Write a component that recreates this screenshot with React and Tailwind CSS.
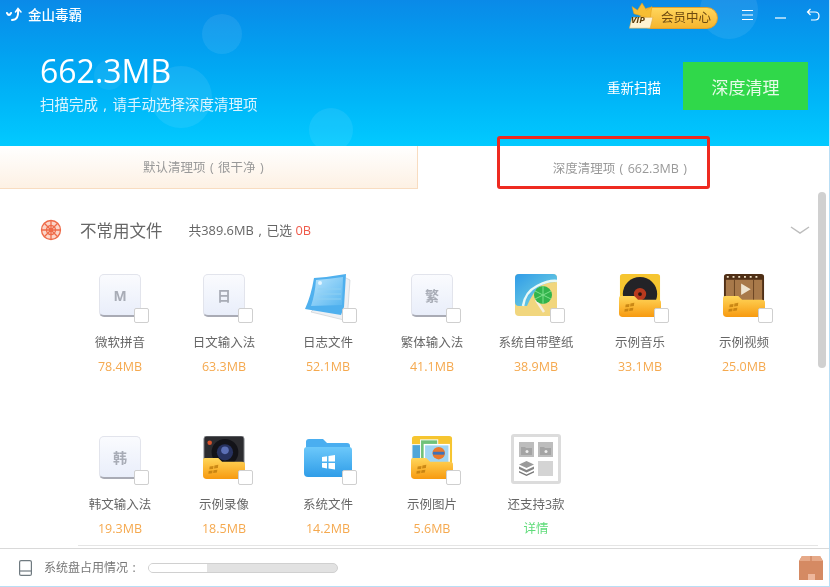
import React from 'react'

const cjk = { fontFamily: '"Open Sans","Noto Sans CJK SC",sans-serif' }

// the original UI font centres its punctuation in a full-width cell
function P({children}){
  return <span className="inline-block w-[1em] text-center">{children}</span>
}

function Check(){
  return <span className="absolute right-[-8px] bottom-[-3px] w-[15px] h-[15px] bg-white border border-[#cfcfcf] rounded-[2px]"></span>
}

function KeyIcon({ch}){
  return (
    <div className="w-[42px] h-[43px] rounded-[5px] bg-gradient-to-b from-[#fafbfe] to-[#e9eefa] border border-[#e2e4ec] border-b-[2px] border-b-[#a9abb5] flex items-center justify-center text-[14px] font-bold text-[#a8acb6]">
      {ch}
    </div>
  )
}

function FolderFront(){
  return (
    <>
      <path d="M0 25q0-2 2-2h14l4 4h21q3 0 3 3v11q0 4-4 4H4q-4 0-4-4z" fill="url(#fold)"/>
      <g fill="#b9770a" opacity=".75">
        <path d="M7 32l4-.6-.4 3-4 .5zM12 30.800l4-.6-.4 3.200-4 .5zM6 36.500l4-.5-.4 3-4 .4zM11 35.800l4-.5-.4 3-4 .5z"/>
      </g>
    </>
  )
}

function Defs(){
  return (
    <svg width="0" height="0" className="absolute">
      <defs>
        <linearGradient id="fold" x1="0" y1="0" x2="0" y2="1">
          <stop offset="0" stopColor="#ffd65a"/>
          <stop offset="1" stopColor="#f79a10"/>
        </linearGradient>
        <linearGradient id="sea" x1="0" y1="0" x2="1" y2="1">
          <stop offset="0" stopColor="#2f9be8"/>
          <stop offset="1" stopColor="#7fdce0"/>
        </linearGradient>
        <linearGradient id="blue" x1="0" y1="0" x2="0" y2="1">
          <stop offset="0" stopColor="#6cc8fa"/>
          <stop offset="1" stopColor="#2f9de8"/>
        </linearGradient>
        <linearGradient id="cover" x1="0" y1="0" x2="1" y2="1">
          <stop offset="0" stopColor="#b8e4fc"/>
          <stop offset="1" stopColor="#58b6f0"/>
        </linearGradient>
      </defs>
    </svg>
  )
}

function NoteIcon(){
  return (
    <svg width="46" height="47" viewBox="0 0 46 47">
      <path d="M6 38l33 8 4-12 2-28-6-3z" fill="#eef0f3" stroke="#c3c9d0" strokeWidth=".6"/>
      <path d="M9 4Q24 3 41 0L39 33 36 41 0 35Q6 22 9 4z" fill="#4fb0ee"/>
      <path d="M11 6Q24 5 38 3L37 31 6 32Q10 20 11 6z" fill="url(#cover)"/>
      <path d="M13 15h23M12 20h24M11 25h25" stroke="#8fd0f2" strokeWidth="1"/>
      <circle cx="15" cy="9" r="2" fill="#e4f5ff"/>
    </svg>
  )
}

function BeachIcon(){
  return (
    <svg width="42" height="42" viewBox="0 0 42 42">
      <rect width="42" height="42" rx="4" fill="#f1d67e"/>
      <path d="M0 4q0-4 4-4h34q4 0 4 4v4q-12 0-18 5t-12 19H4q-4 0-4-4z" fill="url(#sea)"/>
      <path d="M8 32q2-14 14-20t20-5" fill="none" stroke="#e8f8f6" strokeWidth="2.500"/>
      <path d="M21 26l8 12" stroke="#f5efe0" strokeWidth="2.500"/>
      <circle cx="28" cy="21" r="9" fill="#32b44c"/>
      <path d="M28 12v18M20 17l16 8M36 17l-16 8" stroke="#7ee08c" strokeWidth="1"/>
    </svg>
  )
}

function MusicIcon(){
  return (
    <svg width="42" height="44" viewBox="0 0 44 46">
      <rect x="1" y="0" width="42" height="30" rx="3" fill="#f6c530"/>
      <circle cx="22" cy="21" r="18" fill="#232327"/>
      <circle cx="22" cy="21" r="6.500" fill="#b83a1e"/>
      <circle cx="22" cy="21" r="2" fill="#2a1410"/>
      <FolderFront/>
    </svg>
  )
}

function VideoIcon(){
  return (
    <svg width="42" height="44" viewBox="0 0 44 46">
      <rect x="1" y="0" width="42" height="30" rx="3" fill="#4f2f16"/>
      <rect x="3" y="6" width="38" height="22" fill="#a8794a"/>
      <path d="M4 3h36" stroke="#f3e4c8" strokeWidth="2" strokeDasharray="2 4"/>
      <path d="M12 6v22M32 6v22" stroke="#6a4423" strokeWidth="1"/>
      <path d="M19 10l10 6-10 6z" fill="#eee3cf"/>
      <FolderFront/>
    </svg>
  )
}

function CameraIcon(){
  return (
    <svg width="42" height="44" viewBox="0 0 44 46">
      <rect x="1" y="0" width="42" height="34" rx="3" fill="#2c2c30" stroke="#85878c" strokeWidth="1"/>
      <circle cx="23" cy="17" r="14" fill="#131318"/>
      <circle cx="23" cy="17" r="8.500" fill="#27325f"/>
      <circle cx="23" cy="15" r="4" fill="#5b6fb5"/>
      <circle cx="7" cy="7" r="2.400" fill="#d9522c"/>
      <FolderFront/>
    </svg>
  )
}

function WinFolder(){
  return (
    <svg width="50" height="42" viewBox="0 0 50 42">
      <path d="M3 6q0-3 3-3h14l4 4h20q3 0 3 3v6H3z" fill="#4aaef0"/>
      <path d="M1 14q0-3 3-3h42q3 0 3 3v23q0 4-4 4H5q-4 0-4-4z" fill="url(#blue)"/>
      <path d="M19 21l5-.8v5.400h-5zM25.500 20l6.500-1v6.600h-6.500zM19 27h5v5.400l-5-.8zM25.500 27H32v6.600l-6.500-1z" fill="#fff"/>
    </svg>
  )
}

function PhotoIcon(){
  return (
    <svg width="42" height="44" viewBox="0 0 44 46">
      <rect x="1" y="0" width="42" height="30" rx="3" fill="#f6c530"/>
      <rect x="1" y="9" width="14" height="18" fill="#4fa6d8" stroke="#fff"/>
      <rect x="10" y="4" width="18" height="20" fill="#6fc27a" stroke="#fff"/>
      <rect x="14" y="9" width="26" height="22" fill="#9fd5f3" stroke="#fff" strokeWidth="1.500"/>
      <circle cx="29" cy="18" r="6.500" fill="#e8792d"/>
      <path d="M23 18h12" stroke="#3f72b8" strokeWidth="3"/>
      <FolderFront/>
    </svg>
  )
}

function Cell(){
  return (
    <svg viewBox="0 0 15 15" className="w-[15px] h-[15px]">
      <rect width="15" height="15" fill="#bdbdbd"/>
      <path d="M2 5h4l1 1h6v7H2z" fill="#a4a4a4"/>
      <circle cx="8" cy="9.500" r="1.500" fill="#eee"/>
    </svg>
  )
}

function MoreIcon(){
  return (
    <div className="w-[50px] h-[50px] -mt-[2px] border-[3px] border-[#dcdcdc] rounded-[3px] grid grid-cols-2 gap-[4px] p-[5px] bg-white">
      <Cell/>
      <Cell/>
      <svg viewBox="0 0 15 15" className="w-[15px] h-[15px]"><path d="M7.500 0L15 3.500 7.500 7 0 3.500z" fill="#9a9a9a"/><path d="M0 5.500L7.500 9 15 5.500V8l-7.500 3.500L0 8z" fill="#868686"/><path d="M0 10l7.500 3.500L15 10v1.500L7.500 15 0 11.500z" fill="#777"/></svg>
      <span className="w-[15px] h-[15px] bg-[#d4d4d4]"></span>
    </div>
  )
}

function Item({icon, name, size, noCheck, green}){
  return (
    <div className="flex flex-col items-center">
      <div className="relative w-[42px] h-[46px] flex items-start justify-center">
        <div className="shrink-0">{icon}</div>
        {!noCheck && <Check/>}
      </div>
      <div className="mt-[13px] text-[12.5px] leading-[20px] text-[#666] whitespace-nowrap">{name}</div>
      <div className={`mt-[5px] text-[12.5px] leading-[18px] ${green ? 'text-[#5fdc7a]' : 'text-[#f5a94f]'}`}>{size}</div>
    </div>
  )
}

const items = [
  { icon: <KeyIcon ch="M"/>, name: '微软拼音', size: '78.4MB' },
  { icon: <KeyIcon ch="日"/>, name: '日文输入法', size: '63.3MB' },
  { icon: <NoteIcon/>, name: '日志文件', size: '52.1MB' },
  { icon: <KeyIcon ch="繁"/>, name: '繁体输入法', size: '41.1MB' },
  { icon: <BeachIcon/>, name: '系统自带壁纸', size: '38.9MB' },
  { icon: <MusicIcon/>, name: '示例音乐', size: '33.1MB' },
  { icon: <VideoIcon/>, name: '示例视频', size: '25.0MB' },
  { icon: <KeyIcon ch="韩"/>, name: '韩文输入法', size: '19.3MB' },
  { icon: <CameraIcon/>, name: '示例录像', size: '18.5MB' },
  { icon: <WinFolder/>, name: '系统文件', size: '14.2MB' },
  { icon: <PhotoIcon/>, name: '示例图片', size: '5.6MB' },
  { icon: <MoreIcon/>, name: '还支持3款', size: '详情', noCheck: true, green: true },
]

export default function App(){
  return (
    <div style={cjk} className="relative w-[830px] h-[587px] overflow-hidden bg-white flex flex-col border-r border-b border-[#b9def5] blur-[0.35px]">
      <Defs/>
      {/* header */}
      <div className="relative h-[146px] shrink-0 overflow-hidden bg-gradient-to-b from-[#0a8ae8] to-[#02caff] text-white">
        <span className="absolute left-[202px] top-[14px] w-[40px] h-[40px] rounded-full bg-white/[0.08]"></span>
        <span className="absolute left-[150px] top-[66px] w-[62px] h-[62px] rounded-full bg-white/[0.08]"></span>
        <span className="absolute left-[94px] top-[60px] w-[30px] h-[30px] rounded-full bg-white/[0.06]"></span>
        <span className="absolute left-[309px] top-[108px] w-[44px] h-[44px] rounded-full bg-white/[0.08]"></span>
        <span className="absolute left-[700px] top-[-19px] w-[58px] h-[58px] rounded-full bg-white/[0.08]"></span>

        <div className="relative h-[30px] flex items-center pl-[6px]">
          <svg width="16" height="16" viewBox="0 0 16 16" fill="none" stroke="#fff" strokeWidth="2" strokeLinecap="round">
            <path d="M1 6q2 4 4 0M12 3Q13 13 6 13"/>
            <path d="M9.500 5L12 1.500 15 5" strokeWidth="1.500"/>
          </svg>
          <span className="ml-[6px] text-[13.5px] font-medium">金山毒霸</span>

          <div className="ml-auto flex items-center">
            <div className="relative mt-[6px] flex items-center h-[22px] w-[78px] pl-[20px] rounded-full bg-gradient-to-b from-[#ffd65c] to-[#f5b52c] border border-[#e0a030] text-[#6d4a10] text-[12.5px]">
              <span>会员中心</span>
              <svg className="absolute left-[-13px] top-[-6px]" width="28" height="28" viewBox="0 0 28 31">
                <path d="M5 13L3 5l6 4 5-8 5 8 6-4-2 13z" fill="#f7be33" stroke="#e29c1c" strokeWidth=".6"/>
                <path d="M3 17h23l-3 12H0z" fill="#fff3d2" stroke="#dca63f" strokeWidth=".6"/>
              </svg>
              <span className="absolute left-[-10px] top-[5px] text-[9px] font-bold italic text-[#5a3b08]">VIP</span>
            </div>
            <svg className="ml-[24px]" width="11" height="12" viewBox="0 0 11 12" stroke="#fff" strokeWidth="1.200">
              <path d="M0 1.500h11M0 6h11M0 10.500h11"/>
            </svg>
            <svg className="ml-[22px] mt-[6px]" width="11" height="12" viewBox="0 0 11 12" stroke="#fff" strokeWidth="1.200">
              <path d="M0 6h11"/>
            </svg>
            <svg className="ml-[20px] mr-[9px]" width="14" height="14" viewBox="0 0 14 14" fill="none" stroke="#fff" strokeWidth="1.200">
              <path d="M4.500 1L1.500 4l3 3M1.500 4H9q4 0 4 4t-4 4H5"/>
            </svg>
          </div>
        </div>

        <div className="relative flex items-start pl-[40px] pr-[21px] pt-[18px]">
          <div>
            <div className="text-[32px] leading-[46px] font-normal">662.3MB</div>
            <div className="mt-[1px] text-[14.5px] leading-[20px] text-[#dcf5ff]">扫描完成<P>,</P>请手动选择深度清理项</div>
          </div>
          <span className="ml-auto mt-[30px] text-[13.5px] leading-[20px]">重新扫描</span>
          <button className="ml-[22px] mt-[14px] pt-[3px] w-[125px] h-[48px] bg-[#30d84a] text-[17px] text-[#e6fbe8]">深度清理</button>
        </div>
      </div>

      {/* tabs */}
      <div className="h-[43px] shrink-0 flex text-[12.5px] text-[#999]">
        <div className="w-[418px] flex items-center justify-center bg-gradient-to-b from-white to-[#fdf1e4] border-b border-r border-[#f8dcc0] pr-[6px] pt-[3px]"><span>默认清理项<P>(</P>很干净<P>)</P></span></div>
        <div className="flex-1 flex items-center justify-center pr-[3px] pt-[3px]"><span>深度清理项<P>(</P>662.3MB<P>)</P></span></div>
      </div>

      {/* content */}
      <div className="relative flex-1 min-h-0 pl-[68px]">
        <div className="flex items-center h-[40px] mt-[21px] -ml-[28px] pr-[19px]">
          <svg width="22" height="22" viewBox="0 0 22 22" fill="none" stroke="#ee6a48" strokeWidth="1.300">
            <circle cx="11" cy="11" r="9.500" fill="#fbd5c8"/>
            <circle cx="11" cy="11" r="4.500"/>
            <circle cx="11" cy="11" r="1.600" fill="#ee6a48"/>
            <path d="M1.500 11h19M11 1.500v19M4.300 4.300l13.400 13.400M17.700 4.300L4.300 17.700"/>
          </svg>
          <span className="ml-[18px] mt-[2px] text-[16.5px] text-[#666]">不常用文件</span>
          <span className="ml-[26px] mt-[2px] text-[12.8px] text-[#666]">共389.6MB<P>,</P>已选 <span className="text-[#ef5a4a]">0B</span></span>
          <svg className="ml-auto" width="20" height="9" viewBox="0 0 20 9" fill="none" stroke="#bdbdbd" strokeWidth="1.500">
            <path d="M1 1l9 6 9-6"/>
          </svg>
        </div>

        <div className="grid grid-cols-[repeat(7,104px)] auto-rows-[162px] mt-[24px]">
          {items.map(i => <Item key={i.name} {...i}/>)}
        </div>

        <div className="absolute left-[78px] right-[11px] bottom-[2px] h-px bg-[#e5e5e5]"></div>
        <div className="absolute right-[3px] top-[3px] w-[8px] h-[176px] rounded-full bg-[#d0d0d0]"></div>
      </div>

      {/* footer */}
      <div className="h-[38px] shrink-0 flex items-center border-t border-[#d9d9d9] pl-[19px] pr-[6px] text-[12px] text-[#777]">
        <svg width="13" height="16" viewBox="0 0 13 16" fill="none" stroke="#6f7a80" strokeWidth="1.200">
          <rect x=".6" y=".6" width="11.800" height="14.800" rx="1.500"/>
          <path d="M.6 11h11.800"/>
        </svg>
        <span className="ml-[12px]">系统盘占用情况<P>:</P></span>
        <div className="ml-[8px] w-[190px] h-[10px] rounded-full bg-[#e2e2e2] border border-[#d0d0d0] overflow-hidden">
          <div className="w-[58px] h-full bg-white"></div>
        </div>
        <svg className="ml-auto" width="24" height="24" viewBox="0 0 24 24">
          <path d="M3 0h18l3 5v19H0V5z" fill="#d58a63"/>
          <path d="M3 0h18l3 5H0z" fill="#e6a988"/>
          <path d="M12 0v5" stroke="#c77b55"/>
          <rect x="9" y="18" width="7" height="6" fill="#eeb79c"/>
        </svg>
      </div>

      {/* annotation */}
      <div className="absolute left-[497px] top-[136px] w-[213px] h-[53px] border-[3px] border-[#ee2a20] rounded-[3px]"></div>
    </div>
  )
}
